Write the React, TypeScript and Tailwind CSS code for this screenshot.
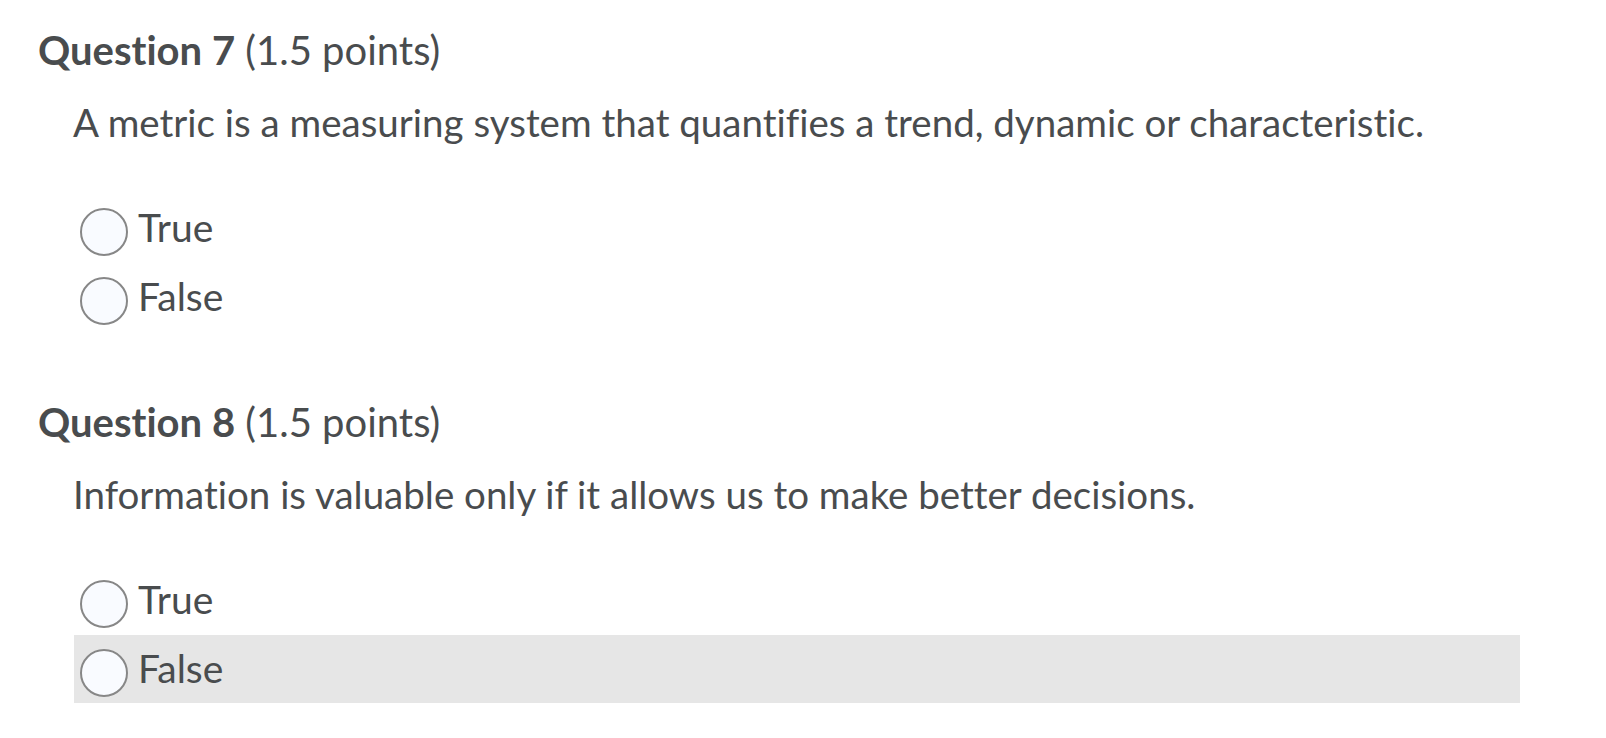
const questions = [
  {
    number: 7,
    points: "1.5 points",
    text: "A metric is a measuring system that quantifies a trend, dynamic or characteristic.",
    hovered: -1,
  },
  {
    number: 8,
    points: "1.5 points",
    text: "Information is valuable only if it allows us to make better decisions.",
    hovered: 1,
  },
];

const options = ["True", "False"];

function Radio() {
  return (
    <span className="mt-[14px] ml-[6px] block h-[48px] w-[48px] shrink-0 rounded-full border-2 border-[#878787] bg-[#f9fbff]" />
  );
}

export default function App() {
  return (
    <div className="min-h-screen bg-white pt-[25px] pl-[38px] font-['Lato',sans-serif] text-[#494c4e] [font-variant-ligatures:none]">
      {questions.map((q, qi) => (
        <section key={q.number} className={qi === 0 ? "mb-[66px]" : ""}>
          <h2 className="text-[40px] leading-[50px]">
            <span className="font-bold">Question {q.number}</span> ({q.points})
          </h2>
          <p className="mt-[25px] pl-[35px] text-[38.5px] leading-[44px]">{q.text}</p>
          <div className="mt-[50px] ml-[36px] flex w-[1446px] flex-col gap-px">
            {options.map((opt, oi) => (
              <label
                key={opt}
                className={`flex h-[68px] items-start gap-[10px] ${
                  q.hovered === oi ? "bg-[#e6e6e6]" : ""
                }`}
              >
                <Radio />
                <span className="mt-[11px] text-[39px] leading-[44px]">{opt}</span>
              </label>
            ))}
          </div>
        </section>
      ))}
    </div>
  );
}
